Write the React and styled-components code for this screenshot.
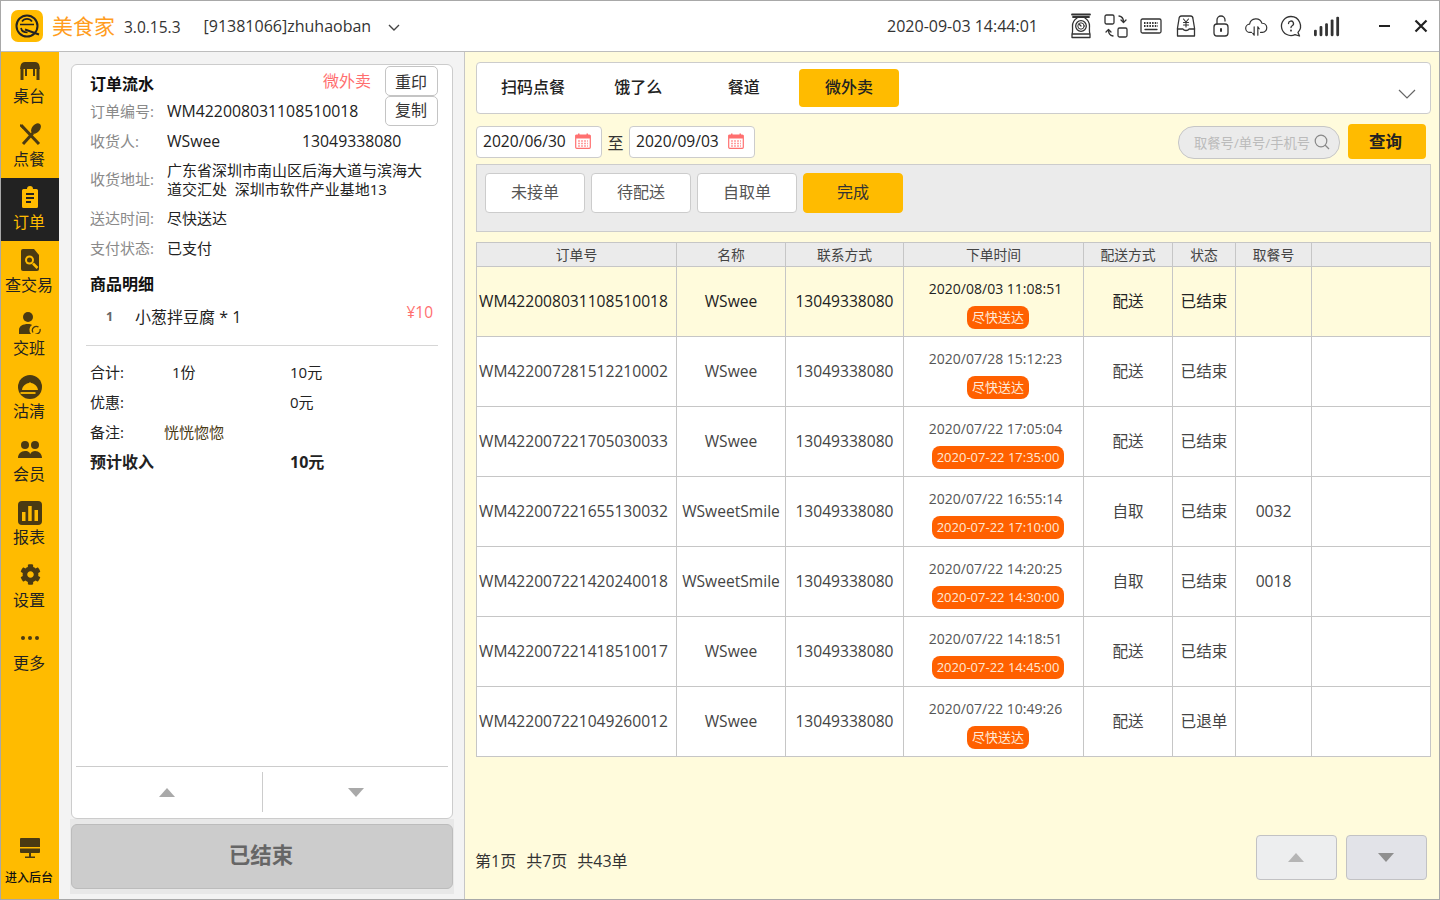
import React from 'react';
import styled, { createGlobalStyle } from 'styled-components';
import { FaCog } from 'react-icons/fa';

const GlobalStyle = createGlobalStyle`
  html, body { margin: 0; padding: 0; }
  body {
    font-family: "Open Sans", "Noto Sans CJK SC", sans-serif;
    color: #222;
  }
  * { box-sizing: border-box; }
`;

const Win = styled.div`
  width: 1440px;
  height: 900px;
  border: 1px solid #a8a8a8;
  display: flex;
  flex-direction: column;
  overflow: hidden;
`;

const TitleBar = styled.header`
  height: 51px;
  flex: none;
  background: #fff;
  border-bottom: 1px solid #bdbdbd;
  display: flex;
  align-items: center;
  padding: 0 10px;
`;

const BrandName = styled.span`
  margin-left: 9px;
  font-size: 21px;
  color: #ff9d1e;
  line-height: 1;
`;

const Version = styled.span`
  margin-left: 9px;
  margin-top: 1px;
  font-size: 15.5px;
  color: #333;
`;

const Account = styled.span`
  margin-left: 23px;
  font-size: 16px;
  color: #333;
`;

const Chevron = styled.svg`
  margin-left: 17px;
  margin-top: 4px;
`;

const Clock = styled.span`
  margin-left: auto;
  font-size: 16px;
  color: #333;
`;

const ToolIcons = styled.div`
  margin-left: 31px;
  display: flex;
  gap: 11px;
  align-items: center;
`;

const WinControls = styled.div`
  margin-left: 38px;
  margin-right: 1px;
  display: flex;
  gap: 22px;
  align-items: center;
`;

const Body = styled.div`
  flex: 1;
  min-height: 0;
  display: flex;
`;

const Sidebar = styled.nav`
  width: 58px;
  flex: none;
  background: #ffbb00;
  display: flex;
  flex-direction: column;
`;

const NavItem = styled.div`
  height: 63px;
  flex: none;
  padding: 8px 2px 0 0;
  display: flex;
  flex-direction: column;
  align-items: center;
  background: ${p => (p.$active ? '#222' : 'transparent')};
  color: ${p => (p.$active ? '#ffbb00' : '#222')};
  font-size: 16px;
  line-height: 22px;
  white-space: nowrap;
`;

const NavIcon = styled.span`
  height: 22px;
  margin: 0 0 3px 2px;
  display: flex;
  align-items: flex-start;
  svg { display: block; }
`;

const BackendLink = styled.div`
  margin-top: auto;
  padding: 0 2px 13px 0;
  display: flex;
  flex-direction: column;
  align-items: center;
  font-size: 12px;
  font-weight: 500;
  line-height: 16px;
  white-space: nowrap;
  color: #111;
  svg { display: block; margin: 0 0 11px 2px; }
`;

const OrderColumn = styled.section`
  width: 406px;
  flex: none;
  background: #f3f3f3;
  border-right: 1px solid #c6c6c6;
  padding: 12px 11px 5px 12px;
  display: flex;
  flex-direction: column;
`;

const OrderCard = styled.div`
  flex: 1;
  min-height: 0;
  background: #fff;
  border: 1px solid #ccc;
  border-radius: 6px;
  display: flex;
  flex-direction: column;
`;

const CardBody = styled.div`
  flex: 1;
  padding: 1px 14px 0 18px;
`;

const InfoRow = styled.div`
  display: grid;
  grid-template-columns: 77px 1fr ${p => (p.$action ? '53px' : '')};
  align-items: center;
  min-height: ${p => p.$h || 30}px;
  font-size: 15px;
  line-height: 19px;
`;

const TitleRow = styled.div`
  display: flex;
  align-items: center;
  height: 30px;
`;

const OrderTitle = styled.h2`
  margin: 4px 0 0;
  font-size: 16px;
  font-weight: 700;
  color: #111;
`;

const Channel = styled.span`
  margin-left: auto;
  margin-right: 14px;
  margin-top: -3px;
  font-size: 16px;
  color: #ff6f6f;
`;

const SmallButton = styled.button`
  width: 53px;
  height: 30px;
  padding: 0 1px 1px 0;
  border: 1px solid #c4c4c4;
  border-radius: 5px;
  background: #fff;
  font: inherit;
  font-size: 16px;
  color: #333;
`;

const Label = styled.span`
  color: #8a8a8a;
  font-size: 15px;
`;

const Value = styled.span`
  color: ${p => p.$color || '#222'};
  font-size: ${p => p.$size || 15}px;
`;

const Contact = styled.div`
  display: grid;
  grid-template-columns: 135px 1fr;
`;

const SectionTitle = styled.h3`
  margin: 7px 0 0;
  font-size: 16px;
  font-weight: 700;
  line-height: 28px;
  color: #111;
`;

const GoodsRow = styled.div`
  margin-top: 3px;
  padding: 0 5px 0 16px;
  display: flex;
  align-items: center;
  height: 30px;
  font-size: 16px;
`;

const GoodsIndex = styled.span`
  width: 29px;
  font-size: 12.5px;
  font-weight: 700;
  color: #666;
`;

const GoodsPrice = styled.span`
  margin-left: auto;
  margin-top: -8px;
  color: #ff6f6f;
  font-size: 15.5px;
`;

const Divider = styled.div`
  height: 1px;
  background: #d6d6d6;
  margin: 14px 0 10px -4px;
`;

const SummaryRow = styled.div`
  display: grid;
  grid-template-columns: ${p => p.$col || 82}px 118px 1fr;
  align-items: center;
  height: 30px;
  font-weight: ${p => (p.$strong ? 700 : 400)};
  font-size: ${p => (p.$strong ? 16 : 15)}px;
`;

const RemarkText = styled.span`
  font-size: 15px;
  color: #4a3a14;
  white-space: nowrap;
`;

const CardPager = styled.div`
  height: 52px;
  flex: none;
  margin: 0 4px;
  border-top: 1px solid #ccc;
  padding: 5px 0 6px;
  display: flex;
`;

const CardPagerCell = styled.div`
  flex: 1;
  display: flex;
  align-items: center;
  justify-content: center;
  &:first-child { flex: 0 0 186px; padding-right: 4px; }
  & + & { border-left: 1px solid #ccc; }
`;

const Triangle = styled.span`
  width: 0;
  height: 0;
  border-left: 8px solid transparent;
  border-right: 8px solid transparent;
  ${p => (p.$down ? 'border-top' : 'border-bottom')}: 9px solid ${p => p.$color || '#a9a9a9'};
`;

const StatusWrap = styled.div`
  flex: none;
  background: #e8e8e8;
  margin: 0 -1px;
  padding: 5px 1px;
`;

const StatusButton = styled.div`
  height: 65px;
  padding: 0 2px 7px 0;
  background: #cccccc;
  border: 1px solid #bcbcbc;
  border-radius: 6px;
  display: flex;
  align-items: center;
  justify-content: center;
  font-size: 21.5px;
  font-weight: 700;
  color: #666;
`;

const Main = styled.main`
  flex: 1;
  min-width: 0;
  background: #fffbdc;
  padding: 10px 8px 19px 11px;
  display: flex;
  flex-direction: column;
`;

const ChannelTabs = styled.div`
  height: 52px;
  flex: none;
  background: #fff;
  border: 1px solid #ccc;
  border-radius: 4px;
  padding: 6px 14px 0 6px;
  display: flex;
  gap: 5.33px;
`;

const ChannelTab = styled.div`
  width: 100px;
  height: 38px;
  padding-bottom: 4px;
  border-radius: 4px;
  display: flex;
  align-items: center;
  justify-content: center;
  font-size: 16px;
  font-weight: 500;
  color: #222;
  background: ${p => (p.$active ? '#ffbb00' : 'transparent')};
`;

const TabsChevron = styled.svg`
  margin-left: auto;
  margin-top: 20px;
`;

const FilterBar = styled.div`
  height: 35px;
  flex: none;
  margin-top: 10px;
  display: flex;
  align-items: center;
  padding-right: 5px;
`;

const DateBox = styled.div`
  width: 126px;
  height: 32px;
  background: #fff;
  border: 1px solid #ccc;
  border-radius: 4px;
  padding: 0 10px 2px 6px;
  display: flex;
  align-items: center;
  justify-content: space-between;
  font-size: 15.6px;
  color: #222;
`;

const DateSep = styled.span`
  width: 27px;
  text-align: center;
  font-size: 16px;
  margin-top: 1px;
  color: #333;
`;

const SearchBox = styled.div`
  margin-left: auto;
  margin-top: 1px;
  width: 162px;
  height: 33px;
  background: #ebebeb;
  border: 1px solid #c6c6c6;
  border-radius: 16px;
  padding: 0 9px 0 15px;
  display: flex;
  align-items: center;
  justify-content: space-between;
  font-size: 13.3px;
  color: #bbb;
  white-space: nowrap;
`;

const QueryButton = styled.div`
  margin-left: 8px;
  width: 78px;
  height: 35px;
  padding: 0 3px 2px 0;
  border-radius: 4px;
  background: #ffbb00;
  display: flex;
  align-items: center;
  justify-content: center;
  font-size: 16.5px;
  font-weight: 700;
  color: #222;
`;

const StatePanel = styled.div`
  height: 68px;
  flex: none;
  margin-top: 5px;
  background: #ebebeb;
  border: 1px solid #ccc;
  padding: 8px;
  display: flex;
  gap: 6px;
`;

const StateButton = styled.div`
  width: 100px;
  height: 40px;
  padding-bottom: 5px;
  border-radius: 4px;
  border: 1px solid ${p => (p.$active ? '#ffbb00' : '#ccc')};
  background: ${p => (p.$active ? '#ffbb00' : '#fff')};
  display: flex;
  align-items: center;
  justify-content: center;
  font-size: 16px;
  color: ${p => (p.$active ? '#333' : '#555')};
`;

const OrderTable = styled.table`
  margin-top: 10px;
  width: 955px;
  flex: none;
  table-layout: fixed;
  border-collapse: collapse;
`;

const Th = styled.th`
  height: 24px;
  padding: 0 0 2px;
  background: #ebebeb;
  border: 1px solid #c6c6c6;
  font-size: 13.8px;
  font-weight: 400;
  color: #444;
`;

const Td = styled.td`
  height: 70px;
  padding: 0 0 2px ${p => (p.$left ? '2px' : '0')};
  border: 1px solid #c6c6c6;
  text-align: ${p => (p.$left ? 'left' : 'center')};
  font-size: 15.6px;
  white-space: nowrap;
  color: ${p => (p.$selected ? '#222' : '#444')};
  background: ${p => (p.$selected ? '#fffbdc' : '#fff')};
`;

const TimeCell = styled.div`
  margin-top: 8px;
  padding-left: 4px;
  display: flex;
  flex-direction: column;
  align-items: center;
  gap: 8px;
`;

const PlacedAt = styled.span`
  font-size: 14px;
  line-height: 18px;
  color: ${p => (p.$selected ? '#222' : '#555')};
`;

const DeliveryPill = styled.span`
  height: 23px;
  margin-left: 5px;
  padding: 0 5px;
  border-radius: 8px;
  background: #ff6000;
  color: #ffe9d6;
  font-size: 13px;
  line-height: 22px;
`;

const PageFooter = styled.footer`
  margin-top: auto;
  display: flex;
  align-items: flex-end;
  justify-content: space-between;
  padding-right: 4px;
`;

const PageInfo = styled.div`
  margin-left: -1px;
  margin-bottom: 8px;
  display: flex;
  gap: 10px;
  font-size: 16px;
  color: #333;
`;

const PageButtons = styled.div`
  display: flex;
  gap: 9px;
`;

const PageButton = styled.div`
  width: 81px;
  height: 45px;
  padding-right: 2px;
  background: ${p => (p.$down ? '#e2e3e8' : '#edeeef')};
  border: 1px solid #c2c2c4;
  border-radius: 4px;
  display: flex;
  align-items: center;
  justify-content: center;
`;

const ICON = '#4a3a12';

const Logo = () => (
  <svg width="32" height="32" viewBox="0 0 32 32" fill="none" stroke="#222">
    <rect width="32" height="32" rx="7" fill="#ffbb00" stroke="none" />
    <circle cx="16" cy="16" r="10.500" strokeWidth="2" />
    <path d="M9 14.500h14M11 11.500c1.200-1.800 3-2.700 5-2.700s3.800.9 5 2.700M10 18c.6 3 3.200 4.500 6.500 4.500" strokeWidth="1.700" />
    <path d="M14 19.500l14 5" strokeWidth="2" />
  </svg>
);

const stroke = { fill: 'none', stroke: '#333', strokeWidth: 1.3, strokeLinecap: 'round', strokeLinejoin: 'round' };

const ScaleIcon = () => (
  <svg width="24" height="26" viewBox="0 0 24 26" {...stroke}>
    <path d="M3 1.500h18M4 4h16" strokeWidth="1.800" />
    <path d="M8 5c-3 2-4.500 5-4.500 8 0 3 .5 6-.5 8v3.500h18V21c-1-2-.5-5-.5-8 0-3-1.500-6-4.500-8M3 21h18" />
    <circle cx="12" cy="13" r="5.300" />
    <circle cx="12" cy="13" r="3.200" strokeWidth="1" />
    <path d="M12 13l-1.500-1.500" />
  </svg>
);

const SyncIcon = () => (
  <svg width="24" height="24" viewBox="0 0 24 24" {...stroke}>
    <rect x="1" y="1" width="9" height="9" rx="1.500" />
    <rect x="14" y="14" width="9" height="9" rx="1.500" />
    <path d="M15 2c3 .5 4.500 2.500 4.500 6M17 6l2.500 2.500L22 6M9 22c-3-.5-4.500-2.500-4.500-6M2 18l2.500-2.500L7 18" />
  </svg>
);

const KeyboardIcon = () => (
  <svg width="24" height="24" viewBox="0 0 24 24" {...stroke}>
    <rect x="2" y="5" width="20" height="14" rx="1.500" />
    <path d="M5 9h14M5 12h14" strokeDasharray="1.500 1.200" strokeLinecap="butt" strokeWidth="1.800" />
    <path d="M6 15.500h12" />
  </svg>
);

const CashIcon = () => (
  <svg width="24" height="24" viewBox="0 0 24 24" {...stroke}>
    <path d="M5 5c0-2 1-3 2.500-3h9C18 2 19 3 19 5l1.500 9v8h-17v-8z" />
    <path d="M3.500 15H9c1 2 5 2 6 0h5.500" />
    <path d="M9.500 5L12 8l2.500-3M9.500 8.500h5M9.500 11h5M12 8v5" strokeWidth="1.100" />
  </svg>
);

const LockIcon = () => (
  <svg width="24" height="24" viewBox="0 0 24 24" {...stroke}>
    <rect x="5" y="10" width="14" height="12" rx="3" />
    <path d="M8 10V6a4 4 0 0 1 8 0v1" />
    <path d="M12 15v2" strokeWidth="2" />
  </svg>
);

const CloudIcon = () => (
  <svg width="24" height="22" viewBox="0 0 26 24" {...stroke}>
    <path d="M8 19H6.500a4.500 4.500 0 0 1-.5-9 7 7 0 0 1 13.500-1 5 5 0 0 1 .5 10h-2" />
    <path d="M11 13v9M9.500 20l1.500 2M15 22v-9M15 13l1.500 2" />
  </svg>
);

const HelpIcon = () => (
  <svg width="24" height="24" viewBox="0 0 24 24" {...stroke}>
    <path d="M12 2.500a9.500 9.500 0 1 0 4 18.100l4.500 1.400-1.500-3.600A9.500 9.500 0 0 0 12 2.500z" />
    <path d="M9.500 9.500a2.500 2.500 0 1 1 3.700 2.200c-.8.500-1.200 1-1.200 1.800" />
    <path d="M12 16.500v.2" strokeWidth="1.800" />
  </svg>
);

const SignalIcon = () => (
  <svg width="26" height="22" viewBox="0 0 28 22" fill="#333">
    <rect x="0" y="15" width="3" height="7" rx="1.200" />
    <rect x="6" y="11" width="3" height="11" rx="1.200" />
    <rect x="12" y="8" width="3" height="14" rx="1.200" />
    <rect x="18" y="4" width="3" height="18" rx="1.200" />
    <rect x="24" y="1" width="3" height="21" rx="1.200" />
  </svg>
);

const MinIcon = () => (
  <svg width="14" height="14" viewBox="0 0 14 14"><path d="M1 7h11" stroke="#222" strokeWidth="2" /></svg>
);

const CloseIcon = () => (
  <svg width="14" height="14" viewBox="0 0 14 14"><path d="M1.500 1.500l11 11M12.500 1.500l-11 11" stroke="#222" strokeWidth="2.200" /></svg>
);

const TableIcon = () => (
  <svg width="24" height="22" viewBox="0 0 24 22" fill={ICON}>
    <path d="M7 2h10c2.500 0 4 1.500 4.500 4l.5 3H2l.5-3C3 3.500 4.500 2 7 2z" />
    <rect x="2.500" y="9" width="3" height="11" />
    <rect x="18.500" y="9" width="3" height="11" />
    <rect x="7" y="9" width="2" height="7" />
    <rect x="15" y="9" width="2" height="7" />
  </svg>
);

const DishIcon = () => (
  <svg width="24" height="22" viewBox="0 0 24 22" fill="none">
    <path d="M2 1l4 3-1 2-3-3z" fill={ICON} />
    <path d="M3 2l18 19" stroke={ICON} strokeWidth="3" />
    <path d="M15 10L5 21" stroke={ICON} strokeWidth="3" />
    <ellipse cx="18" cy="5.500" rx="4" ry="6" transform="rotate(40 18 5.500)" fill={ICON} />
  </svg>
);

const ClipIcon = ({ color }) => (
  <svg width="24" height="22" viewBox="0 0 24 22" fill={color}>
    <path d="M5.500 3H9a3 3 0 0 1 6 0h3.500A1.500 1.500 0 0 1 20 4.500v16a1.500 1.500 0 0 1-1.500 1.500h-13A1.500 1.500 0 0 1 4 20.500v-16A1.500 1.500 0 0 1 5.500 3z" />
    <path d="M8 8h8M8 12h8M8 16h5" stroke="#222" strokeWidth="1.800" />
  </svg>
);

const SearchDocIcon = () => (
  <svg width="24" height="22" viewBox="0 0 24 22">
    <path d="M5 0h11l5 6v14a2 2 0 0 1-2 2H5a2 2 0 0 1-2-2V2a2 2 0 0 1 2-2z" fill={ICON} />
    <circle cx="11.500" cy="11" r="4.500" fill="#ffbb00" />
    <circle cx="11.500" cy="11" r="2.500" fill={ICON} />
    <path d="M15 14.500l4.500 4.500" stroke="#ffbb00" strokeWidth="2.500" />
  </svg>
);

const ShiftIcon = () => (
  <svg width="26" height="22" viewBox="0 0 26 22">
    <circle cx="11" cy="5" r="5" fill={ICON} />
    <path d="M2 22v-4c0-4 4-6 9-6 2 0 3 .3 4 1a6 6 0 0 0-1 9z" fill={ICON} />
    <path d="M16 20.500a4 4 0 0 1 5.500-5.500M23 17a4 4 0 0 1-4.500 5" fill="none" stroke={ICON} strokeWidth="1.300" />
  </svg>
);

const ClocheIcon = () => (
  <svg width="24" height="24" viewBox="0 0 24 24">
    <circle cx="12" cy="12" r="12" fill={ICON} />
    <path d="M4 15c.5-4 3.500-6.500 7-7 .2-1 1.800-1 2 0 3.500.5 6.500 3 7 7z" fill="#ffbb00" />
    <path d="M2.500 18h15" stroke="#ffbb00" strokeWidth="1.800" />
  </svg>
);

const PeopleIcon = () => (
  <svg width="26" height="22" viewBox="0 0 26 22" fill={ICON}>
    <circle cx="8" cy="7" r="4" />
    <circle cx="18" cy="7" r="4" />
    <path d="M1 20c0-4 3-7 7-7s5 2 5 3 1-3 5-3 7 3 7 7z" />
  </svg>
);

const ChartIcon = () => (
  <svg width="24" height="24" viewBox="0 0 24 24">
    <rect width="24" height="24" rx="4" fill={ICON} />
    <rect x="4" y="11" width="3.500" height="9" fill="#ffbb00" />
    <rect x="10.200" y="5" width="3.500" height="15" fill="#ffbb00" />
    <rect x="16.500" y="9" width="3.500" height="11" fill="#ffbb00" />
  </svg>
);

const DotsIcon = () => (
  <svg width="24" height="22" viewBox="0 0 24 22" fill={ICON}>
    <circle cx="5" cy="11" r="2" />
    <circle cx="12" cy="11" r="2" />
    <circle cx="19" cy="11" r="2" />
  </svg>
);

const MonitorIcon = () => (
  <svg width="24" height="22" viewBox="0 0 24 22" fill={ICON}>
    <path d="M3 1h18a1 1 0 0 1 1 1v8H2V2a1 1 0 0 1 1-1z" />
    <path d="M2 11.500h20V15a1 1 0 0 1-1 1H3a1 1 0 0 1-1-1z" />
    <rect x="11" y="16" width="2" height="4" />
    <rect x="7" y="19.500" width="10" height="1.500" />
  </svg>
);

const CalendarIcon = () => (
  <svg width="16" height="16" viewBox="0 0 16 16">
    <rect x="0.700" y="2" width="14.600" height="13.300" rx="1" fill="#fff" stroke="#ff7070" strokeWidth="1.200" />
    <rect x="0.700" y="2" width="14.600" height="3.500" fill="#ff7070" />
    <rect x="3" y="0.500" width="1.500" height="3" fill="#ff7070" />
    <rect x="11.500" y="0.500" width="1.500" height="3" fill="#ff7070" />
    <path d="M3 8h10M3 10.500h10M3 13h10" stroke="#ff9c9c" strokeWidth="1.300" strokeDasharray="2 1" />
  </svg>
);

const navItems = [
  { label: '桌台', icon: <TableIcon /> },
  { label: '点餐', icon: <DishIcon /> },
  { label: '订单', icon: <ClipIcon color="#ffbb00" />, active: true },
  { label: '查交易', icon: <SearchDocIcon /> },
  { label: '交班', icon: <ShiftIcon /> },
  { label: '沽清', icon: <ClocheIcon /> },
  { label: '会员', icon: <PeopleIcon /> },
  { label: '报表', icon: <ChartIcon /> },
  { label: '设置', icon: <FaCog size={21} color={ICON} /> },
  { label: '更多', icon: <DotsIcon /> },
];

const columns = [200, 109, 118, 180, 89, 63, 76, 119];
const headers = ['订单号', '名称', '联系方式', '下单时间', '配送方式', '状态', '取餐号', ''];

const ASAP = '尽快送达';

const orders = [
  { id: 'WM422008031108510018', name: 'WSwee', time: '2020/08/03 11:08:51', pill: ASAP, way: '配送', state: '已结束', code: '' },
  { id: 'WM422007281512210002', name: 'WSwee', time: '2020/07/28 15:12:23', pill: ASAP, way: '配送', state: '已结束', code: '' },
  { id: 'WM422007221705030033', name: 'WSwee', time: '2020/07/22 17:05:04', pill: '2020-07-22 17:35:00', way: '配送', state: '已结束', code: '' },
  { id: 'WM422007221655130032', name: 'WSweetSmile', time: '2020/07/22 16:55:14', pill: '2020-07-22 17:10:00', way: '自取', state: '已结束', code: '0032' },
  { id: 'WM422007221420240018', name: 'WSweetSmile', time: '2020/07/22 14:20:25', pill: '2020-07-22 14:30:00', way: '自取', state: '已结束', code: '0018' },
  { id: 'WM422007221418510017', name: 'WSwee', time: '2020/07/22 14:18:51', pill: '2020-07-22 14:45:00', way: '配送', state: '已结束', code: '' },
  { id: 'WM422007221049260012', name: 'WSwee', time: '2020/07/22 10:49:26', pill: ASAP, way: '配送', state: '已退单', code: '' },
];

const App = () => (
  <Win>
    <GlobalStyle />
    <TitleBar>
      <Logo />
      <BrandName>美食家</BrandName>
      <Version>3.0.15.3</Version>
      <Account>[91381066]zhuhaoban</Account>
      <Chevron width="12" height="8" viewBox="0 0 12 8">
        <path d="M1 1l5 5 5-5" fill="none" stroke="#444" strokeWidth="1.400" />
      </Chevron>
      <Clock>2020-09-03 14:44:01</Clock>
      <ToolIcons>
        <ScaleIcon />
        <SyncIcon />
        <KeyboardIcon />
        <CashIcon />
        <LockIcon />
        <CloudIcon />
        <HelpIcon />
        <SignalIcon />
      </ToolIcons>
      <WinControls>
        <MinIcon />
        <CloseIcon />
      </WinControls>
    </TitleBar>
    <Body>
      <Sidebar>
        {navItems.map(item => (
          <NavItem key={item.label} $active={item.active}>
            <NavIcon>{item.icon}</NavIcon>
            {item.label}
          </NavItem>
        ))}
        <BackendLink>
          <MonitorIcon />
          进入后台
        </BackendLink>
      </Sidebar>
      <OrderColumn>
        <OrderCard>
          <CardBody>
            <TitleRow>
              <OrderTitle>订单流水</OrderTitle>
              <Channel>微外卖</Channel>
              <SmallButton>重印</SmallButton>
            </TitleRow>
            <InfoRow $action>
              <Label>订单编号:</Label>
              <Value $size={15.8}>WM422008031108510018</Value>
              <SmallButton>复制</SmallButton>
            </InfoRow>
            <InfoRow>
              <Label>收货人:</Label>
              <Contact>
                <Value $size={15.8}>WSwee</Value>
                <Value $size={15.8}>13049338080</Value>
              </Contact>
            </InfoRow>
            <InfoRow $h={47}>
              <Label>收货地址:</Label>
              <Value>广东省深圳市南山区后海大道与滨海大<br />道交汇处&nbsp;&nbsp;深圳市软件产业基地13</Value>
            </InfoRow>
            <InfoRow>
              <Label>送达时间:</Label>
              <Value>尽快送达</Value>
            </InfoRow>
            <InfoRow>
              <Label>支付状态:</Label>
              <Value>已支付</Value>
            </InfoRow>
            <SectionTitle>商品明细</SectionTitle>
            <GoodsRow>
              <GoodsIndex>1</GoodsIndex>
              小葱拌豆腐 * 1
              <GoodsPrice>¥10</GoodsPrice>
            </GoodsRow>
            <Divider />
            <SummaryRow>
              <span>合计:</span>
              <span>1份</span>
              <span>10元</span>
            </SummaryRow>
            <SummaryRow $col={200}>
              <span>优惠:</span>
              <span>0元</span>
            </SummaryRow>
            <SummaryRow $col={74}>
              <span>备注:</span>
              <RemarkText>恍恍惚惚</RemarkText>
            </SummaryRow>
            <SummaryRow $strong $col={200}>
              <span>预计收入</span>
              <span>10元</span>
            </SummaryRow>
          </CardBody>
          <CardPager>
            <CardPagerCell><Triangle /></CardPagerCell>
            <CardPagerCell><Triangle $down /></CardPagerCell>
          </CardPager>
        </OrderCard>
        <StatusWrap>
          <StatusButton>已结束</StatusButton>
        </StatusWrap>
      </OrderColumn>
      <Main>
        <ChannelTabs>
          <ChannelTab>扫码点餐</ChannelTab>
          <ChannelTab>饿了么</ChannelTab>
          <ChannelTab>餐道</ChannelTab>
          <ChannelTab $active>微外卖</ChannelTab>
          <TabsChevron width="18" height="11" viewBox="0 0 18 11">
            <path d="M1 1l8 8 8-8" fill="none" stroke="#666" strokeWidth="1.200" />
          </TabsChevron>
        </ChannelTabs>
        <FilterBar>
          <DateBox>2020/06/30<CalendarIcon /></DateBox>
          <DateSep>至</DateSep>
          <DateBox>2020/09/03<CalendarIcon /></DateBox>
          <SearchBox>
            取餐号/单号/手机号
            <svg width="16" height="16" viewBox="0 0 16 16">
              <circle cx="7" cy="7" r="5.800" fill="none" stroke="#888" strokeWidth="1.200" />
              <path d="M11 11l4 4" stroke="#888" strokeWidth="1.200" />
            </svg>
          </SearchBox>
          <QueryButton>查询</QueryButton>
        </FilterBar>
        <StatePanel>
          <StateButton>未接单</StateButton>
          <StateButton>待配送</StateButton>
          <StateButton>自取单</StateButton>
          <StateButton $active>完成</StateButton>
        </StatePanel>
        <OrderTable>
          <colgroup>
            {columns.map((w, i) => <col key={i} width={w} />)}
          </colgroup>
          <thead>
            <tr>
              {headers.map((h, i) => <Th key={i}>{h}</Th>)}
            </tr>
          </thead>
          <tbody>
            {orders.map((o, i) => {
              const selected = i === 0;
              return (
                <tr key={o.id}>
                  <Td $selected={selected} $left>{o.id}</Td>
                  <Td $selected={selected}>{o.name}</Td>
                  <Td $selected={selected}>13049338080</Td>
                  <Td $selected={selected}>
                    <TimeCell>
                      <PlacedAt $selected={selected}>{o.time}</PlacedAt>
                      <DeliveryPill>{o.pill}</DeliveryPill>
                    </TimeCell>
                  </Td>
                  <Td $selected={selected}>{o.way}</Td>
                  <Td $selected={selected}>{o.state}</Td>
                  <Td $selected={selected}>{o.code}</Td>
                  <Td $selected={selected} />
                </tr>
              );
            })}
          </tbody>
        </OrderTable>
        <PageFooter>
          <PageInfo>
            <span>第1页</span>
            <span>共7页</span>
            <span>共43单</span>
          </PageInfo>
          <PageButtons>
            <PageButton><Triangle $color="#b5b5b5" /></PageButton>
            <PageButton $down><Triangle $down $color="#8f8f8f" /></PageButton>
          </PageButtons>
        </PageFooter>
      </Main>
    </Body>
  </Win>
);

export default App;
